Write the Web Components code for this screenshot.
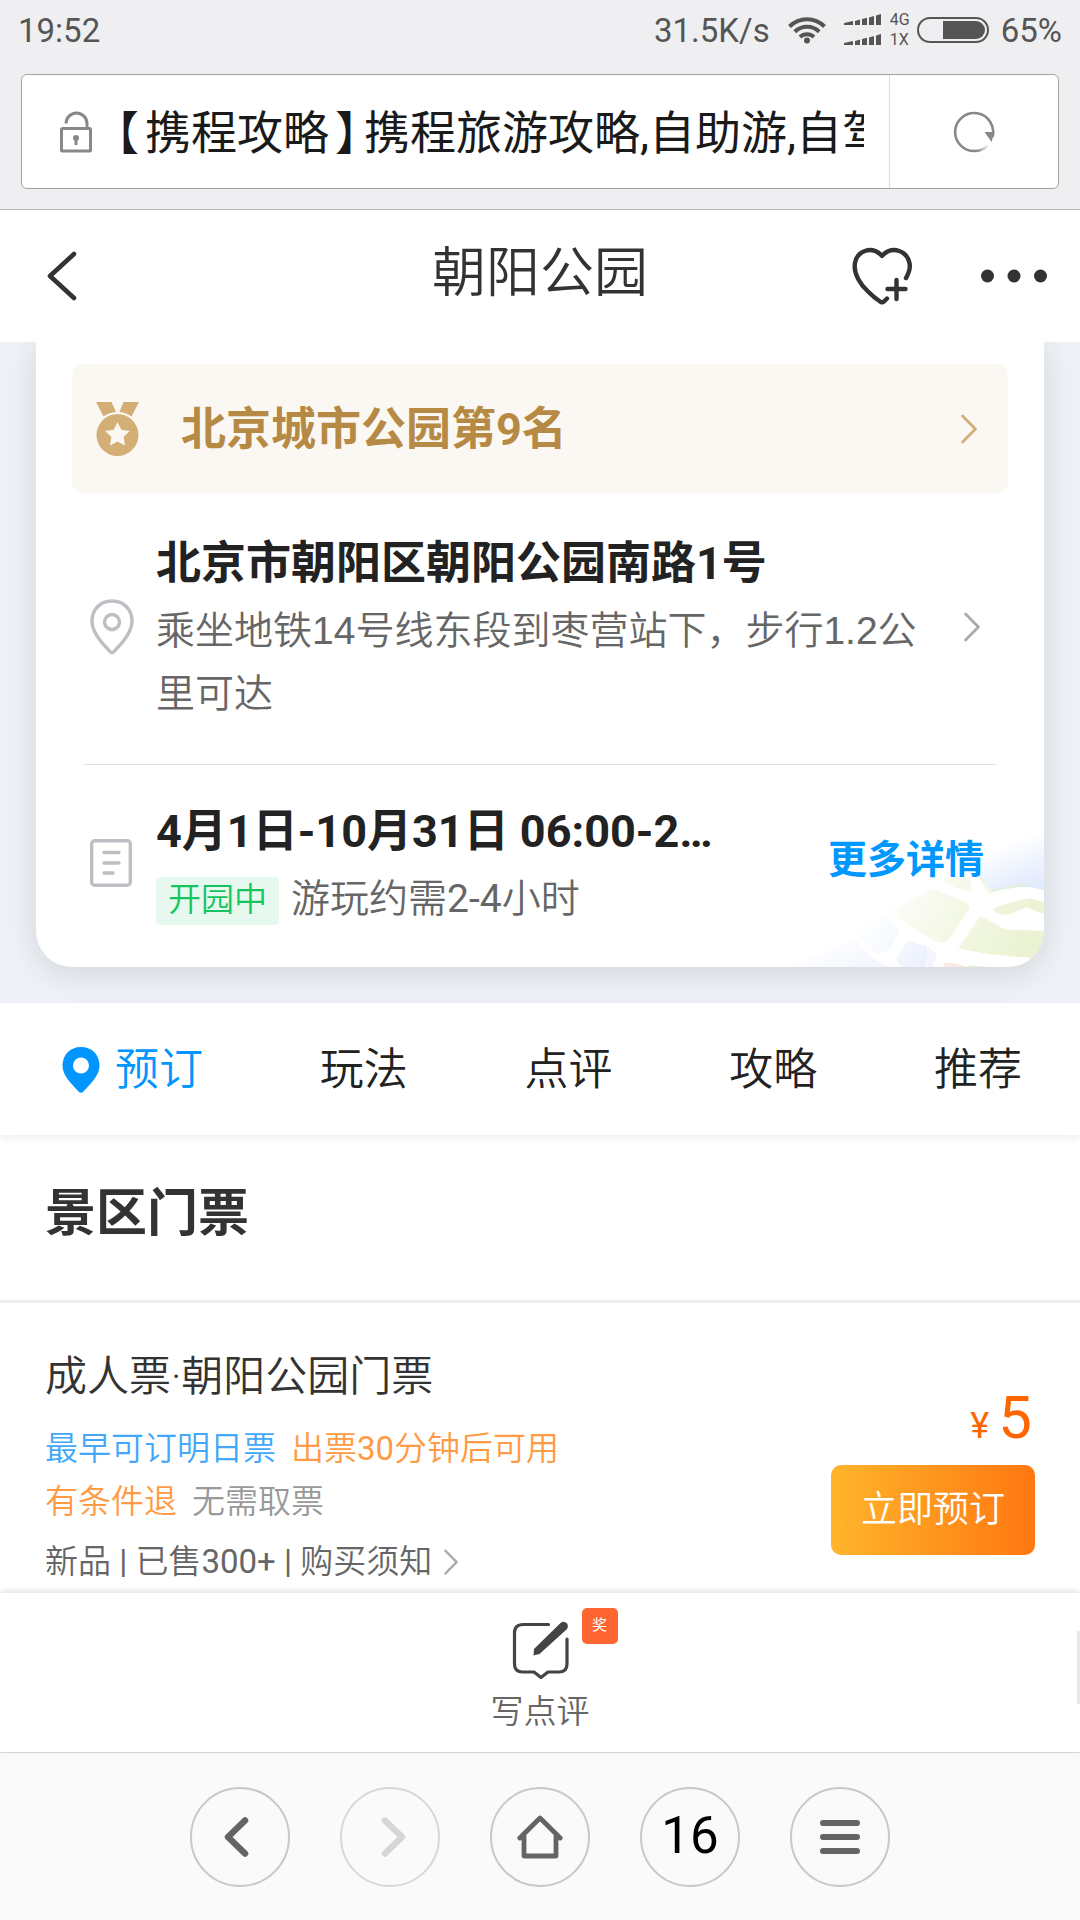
<!DOCTYPE html>
<html lang="zh-CN">
<head>
<meta charset="utf-8">
<meta name="viewport" content="width=device-width, initial-scale=1">
<title>朝阳公园</title>
<style>
  body { margin: 0; font-family: Roboto, "Noto Sans CJK SC", sans-serif; background: #fff; color: #222; }
</style>
</head>
<body>
<park-page></park-page>

<script>
const BASE = `
  *, *::before, *::after { box-sizing: border-box; }
  :host { display: block; }
  h1, h2, h3, p { margin: 0; }
  button { margin: 0; padding: 0; border: 0; background: none; font: inherit; color: inherit; cursor: pointer; }
  a { color: inherit; text-decoration: none; }
  svg { display: block; flex: none; }
  .num { font-weight: 400; }
`;

function define(name, css, html) {
  const template = document.createElement('template');
  template.innerHTML = `<style>${BASE}${css}</style>${html}`;
  customElements.define(name, class extends HTMLElement {
    constructor() {
      super();
      this.attachShadow({ mode: 'open' }).append(template.content.cloneNode(true));
    }
  });
}

/* Right-pointing chevron shared by the rows */
define('chevron-icon', `
  :host { display: block; flex: none; width: 16px; color: #a9abae; }
  svg { width: 100%; }
`, `<svg viewBox="0 0 16 30" fill="none" stroke="currentColor" stroke-width="2.8" stroke-linecap="round" stroke-linejoin="round"><path d="M1.6 2 L14.4 15 L1.6 28"/></svg>`);

define('status-bar', `
  :host { display: flex; align-items: center; justify-content: space-between; height: 60px; padding: 0 18px; color: #555; font-size: 33px; line-height: 40px; }
  span { padding-top: 2px; }
  .right { display: flex; align-items: center; }
  .wifi { margin-left: 18px; }
  .signal { margin-left: 18px; }
  .net { margin-left: 9px; font-size: 16px; line-height: 20px; width: 25px; }
  .battery { margin: 0 12px 0 2px; }
`, `
  <span>19:52</span>
  <div class="right">
    <span>31.5K/s</span>
    <svg class="wifi" width="38" height="28" viewBox="0 0 38 28" fill="none" stroke="#555" stroke-width="4">
      <path d="M1.5 10.5 A24.5 24.5 0 0 1 36.500 10.500"/>
      <path d="M6.800 15.800 A17.500 17.500 0 0 1 31.200 15.800"/>
      <path d="M12 21 A10 10 0 0 1 26 21"/>
      <circle cx="19" cy="24.500" r="3" fill="#555" stroke="none"/>
    </svg>
    <svg class="signal" width="37" height="32" viewBox="0 0 37 32" fill="#555">
      <path d="M0 9 L9 7 V11 H0Z M11 7 L16 5.500 V11 H11Z M18 5 L23 3.800 V11 H18Z M25 3.500 L30 2 V11 H25Z M32 1.500 L37 0 V11 H32Z"/>
      <path d="M0 29 L9 27 V31 H0Z M11 27 L16 25.500 V31 H11Z M18 25 L23 23.800 V31 H18Z M25 23.500 L30 22 V31 H25Z M32 21.500 L37 20 V31 H32Z"/>
    </svg>
    <div class="net"><div>4G</div><div>1X</div></div>
    <svg class="battery" width="72" height="26" viewBox="0 0 72 26">
      <rect x="1" y="1" width="70" height="24" rx="12" fill="none" stroke="#555" stroke-width="2"/>
      <path d="M26 4 H59 A9 9 0 0 1 59 22 H26Z" fill="#555"/>
    </svg>
    <span>65%</span>
  </div>
`);

define('address-bar', `
  :host { padding: 14px 21px 20px; border-bottom: 1px solid #bbb; }
  .box { display: flex; height: 115px; background: #fff; border: 1px solid #a2a2a4; border-radius: 6px; }
  .page { flex: 1; min-width: 0; display: flex; align-items: center; padding: 0 25px 0 38px; text-align: left; color: #1a1a1a; }
  .title { flex: 1; min-width: 0; margin-left: 18px; padding-top: 2px; overflow: hidden; white-space: nowrap; font-size: 46px; line-height: 64px; }
  .mark { padding: 0 6px; font-feature-settings: "halt"; }
  .reload { display: flex; align-items: center; justify-content: center; width: 169px; border-left: 1px solid #ddd; }
`, `
  <div class="box">
    <button class="page" type="button">
      <svg width="32" height="42" viewBox="0 0 32 42" fill="none" stroke="#888" stroke-width="3">
        <path d="M6 12.500 A10.500 10.500 0 0 1 27 12.500 V17"/>
        <rect x="1.500" y="17.500" width="29" height="22.500" rx="1"/>
        <circle cx="16" cy="27" r="3" fill="#888" stroke="none"/>
        <path d="M16 27 V34"/>
      </svg>
      <span class="title"><span class="mark">【</span>携程攻略<span class="mark">】</span>携程旅游攻略,自助游,自驾</span>
    </button>
    <button class="reload" type="button" aria-label="刷新">
      <svg width="42" height="42" viewBox="-1 0 42 42" fill="none">
        <defs><linearGradient id="fade" gradientUnits="userSpaceOnUse" x1="22" y1="40" x2="35" y2="34"><stop stop-color="#888"/><stop offset="1" stop-color="#888" stop-opacity="0"/></linearGradient></defs>
        <path d="M38.500 26 A19 19 0 1 0 21 40" stroke="#888" stroke-width="2.600"/>
        <path d="M21 40 A19 19 0 0 0 34 34.500" stroke="url(#fade)" stroke-width="2.600"/>
        <path d="M30.500 21 H40.500 L37.500 31Z" fill="#888"/>
      </svg>
    </button>
  </div>
`);

define('page-header', `
  :host { display: grid; grid-template-columns: 1fr auto 1fr; align-items: center; padding: 0 32px 0 47px; height: 132px; background: #fff; color: #333; }
  h1 { font-size: 54px; line-height: 76px; font-weight: 350; padding: 0 0 4px; margin-left: -15px; }
  .back { justify-self: start; }
  .actions { justify-self: end; display: flex; align-items: center; gap: 67px; }
`, `
  <button class="back" type="button" aria-label="返回">
    <svg width="30" height="50" viewBox="0 0 30 50" fill="none" stroke="#333" stroke-width="4.600" stroke-linecap="round" stroke-linejoin="round"><path d="M27 3 L3 25 L27 47"/></svg>
  </button>
  <h1>朝阳公园</h1>
  <div class="actions">
    <button type="button" aria-label="收藏">
      <svg width="61" height="58" viewBox="0 0 61 58" fill="none" stroke="#333" stroke-width="4.400" stroke-linecap="round" stroke-linejoin="round">
        <path d="M54 31 C57 26 58.500 21 57.500 16 C55 4 41 -1 32 7 L30 9 L28 7 C19 -1 5 4 3 16 C1 27 9 38 16 44.500 C21 49.500 25 52.500 28 54.500 Q30 56 32 54.500 L35 51.500"/>
        <path d="M44.500 33 V52 M35.500 42 H53.500"/>
      </svg>
    </button>
    <button type="button" aria-label="更多">
      <svg width="68" height="14" viewBox="0 0 68 14" fill="#333"><circle cx="7.500" cy="7" r="6.500"/><circle cx="34" cy="7" r="6.500"/><circle cx="60.500" cy="7" r="6.500"/></svg>
    </button>
  </div>
`);

define('rank-banner', `
  a { display: flex; align-items: center; height: 129px; padding: 0 31px 0 24px; border-radius: 10px; background: #fbf8f4; color: #b68a44; }
  .text { flex: 1; margin-left: 42px; padding-top: 2px; font-size: 45px; line-height: 62px; font-weight: 700; }
  chevron-icon { color: #d3ae75; }
`, `
  <a href="#rank">
    <svg width="43" height="54" viewBox="0 0 43 54" fill="#d3ae75">
      <path d="M0 0 H15.500 L20 10 C15 10.500 11 12 7.500 14.500Z M27.500 0 H43 L35.500 14.500 C32 12 28 10.500 23.500 10Z"/>
      <path fill-rule="evenodd" d="M21.500 12 A21 21 0 1 0 21.500 54 A21 21 0 1 0 21.500 12Z M21.500 20 L25.300 27.800 L33.800 29 L27.600 35 L29.100 43.500 L21.500 39.500 L13.900 43.500 L15.400 35 L9.200 29 L17.700 27.800Z"/>
    </svg>
    <span class="text"><slot></slot></span>
    <chevron-icon></chevron-icon>
  </a>
`);

/* Row with an icon, text lines and a trailing control */
define('info-row', `
  :host { display: flex; align-items: center; margin: 0 12px; padding: 36px 16px 39px 6px; }
  .icon { display: flex; width: 44px; flex: none; }
  .body { flex: 1; min-width: 0; margin: 0 20px 0 22px; }
`, `
  <div class="icon"><slot name="icon"></slot></div>
  <div class="body"><slot></slot></div>
  <slot name="end"></slot>
`);

define('info-card', `
  :host { padding: 0 36px 36px; background: #eef2f6; overflow: hidden; }
  article { position: relative; padding: 22px 36px 0; background: #fff; border-radius: 0 0 36px 36px; box-shadow: 0 6px 30px rgba(50,50,60,.15); }
  .map { position: absolute; right: 0; bottom: 0; border-bottom-right-radius: 36px; }
  rank-banner, info-row { position: relative; }
  h2 { font-size: 45px; line-height: 70px; font-weight: 700; color: #222; white-space: nowrap; }
  .hours h2 { line-height: 62px; }
  .route { font-family: "Liberation Sans", "Noto Sans CJK SC", sans-serif; font-size: 39px; line-height: 63px; font-weight: 350; color: #666; }
  .address { border-bottom: 1px solid #dfe1e4; }
  .hours { padding: 36px 12px 42px 6px; }
  .line { display: flex; align-items: center; gap: 12px; margin-top: 14px; font-size: 39px; line-height: 44px; font-weight: 350; color: #666; white-space: nowrap; }
  .line .note { padding-bottom: 4px; }
  .line .tag { padding: 0 12px 2px; border-radius: 4px; background: #e7f9ef; color: #16c45f; font-size: 33px; line-height: 46px; }
  .more { padding-bottom: 6px; font-size: 39px; line-height: 54px; font-weight: 700; color: #0098ff; }
`, `
  <article>
    <svg class="map" width="251" height="147" viewBox="580 240 752 441">
      <defs>
        <linearGradient id="veil" gradientUnits="userSpaceOnUse" x1="880" y1="440" x2="1260" y2="640"><stop stop-color="#fff" stop-opacity=".06"/><stop offset=".5" stop-color="#fff" stop-opacity=".4"/><stop offset="1" stop-color="#fff" stop-opacity=".7"/></linearGradient>
        <linearGradient id="sky" gradientUnits="userSpaceOnUse" x1="1220" y1="310" x2="1280" y2="460"><stop stop-color="#dbe6fd" stop-opacity="0"/><stop offset="1" stop-color="#dfe8fd"/></linearGradient>
        <linearGradient id="low" gradientUnits="userSpaceOnUse" x1="700" y1="590" x2="750" y2="700"><stop stop-color="#f3f6fd" stop-opacity="0"/><stop offset="1" stop-color="#f3f6fd"/></linearGradient>
        <mask id="m"><rect x="580" y="240" width="752" height="441" fill="url(#veil)"/></mask>
      </defs>
      <path d="M1332 250 V452 Q1280 428 1180 455 L1140 415 L1120 330Z" fill="url(#sky)"/>
      <path d="M580 681 L770 590 Q790 650 870 681Z" fill="url(#low)"/>
      <g mask="url(#m)">
        <path d="M1140 412 L1170 455 Q1230 438 1280 435" fill="none" stroke="#e5efc9" stroke-width="9"/>
        <path d="M1030 415 L1110 412 L1118 455 Q1080 450 1030 428Z" fill="#e5efc9"/>
        <path d="M870 515 L1000 445 L1100 488 Q1114 496 1108 508 L1045 600 Q1032 616 1008 604 Q960 580 870 515Z" fill="#e2edbf"/>
        <path d="M1178 508 Q1210 488 1290 475 L1332 487 V522 L1280 502 L1225 525 Q1190 525 1178 508Z" fill="#e2edbf"/>
        <path d="M1142 528 L1215 568 L1332 572 V600 Q1320 640 1290 652 Q1170 648 1075 624Z" fill="#e2edbf"/>
        <path d="M770 580 L850 525 L900 572 L870 630 Q840 650 805 625Z" fill="#c8dcfb"/>
        <path d="M925 602 L980 620 Q990 650 975 681 H905 Q885 665 892 645Z" fill="#ccd9fb"/>
        <path d="M985 618 L1012 645 L998 681 H982Z" fill="#e9e2f8"/>
        <path d="M1035 670 Q1050 662 1100 681 H1030Z" fill="#fbd0cc"/>
        <path d="M1110 675 L1170 681 H1100Z" fill="#dcecb0"/>
        <path d="M1285 654 L1305 638 L1300 654Z" fill="#fbdcd6"/>
      </g>
    </svg>
    <rank-banner>北京城市公园第9名</rank-banner>
    <info-row class="address">
      <svg slot="icon" width="44" height="56" viewBox="0 0 44 56" fill="none" stroke="#bcc0c4" stroke-width="3.400" stroke-linejoin="round">
        <path d="M22 2 C10 2 2 10.500 2 22 C2 35 15 47 20.500 53 Q22 54.500 23.500 53 C29 47 42 35 42 22 C42 10.500 34 2 22 2Z"/><circle cx="22" cy="23" r="7.500"/>
      </svg>
      <h2>北京市朝阳区朝阳公园南路1号</h2>
      <p class="route">乘坐地铁14号线东段到枣营站下，步行1.2公里可达</p>
      <chevron-icon slot="end"></chevron-icon>
    </info-row>
    <info-row class="hours">
      <svg slot="icon" width="42" height="48" viewBox="0 0 42 48" fill="none" stroke="#bcc0c4" stroke-width="3.400" stroke-linecap="round">
        <rect x="1.700" y="1.700" width="38.600" height="44.600" rx="3"/><path d="M14 13.500 H29 M14 24 H29 M14 34 H23"/>
      </svg>
      <h2>4月1日-10月31日 06:00-2…</h2>
      <div class="line"><span class="tag">开园中</span><span class="note">游玩约需<span class="num">2-4</span>小时</span></div>
      <a slot="end" class="more" href="#detail">更多详情</a>
    </info-row>
  </article>
`);

define('tab-bar', `
  :host { position: relative; background: #fff; box-shadow: 0 3px 8px rgba(0,0,0,.07); }
  nav { display: flex; justify-content: space-between; align-items: center; height: 132px; padding: 1px 58px 0 62px; font-size: 44px; line-height: 62px; font-weight: 350; color: #222; }
  a { display: flex; align-items: center; gap: 15px; }
  .on { color: #0095ff; }
`, `
  <nav>
    <a class="on" href="#book"><svg width="38" height="46" viewBox="0 0 38 46" fill="#0095ff"><path fill-rule="evenodd" d="M19 0 C8 0 .500 8 .500 18.500 C.500 29 10 37 16.500 44.500 Q19 47 21.500 44.500 C28 37 37.500 29 37.500 18.500 C37.500 8 30 0 19 0Z M19 10.500 A8 8 0 1 1 19 26.500 A8 8 0 1 1 19 10.500Z"/></svg>预订</a>
    <a href="#play">玩法</a>
    <a href="#review">点评</a>
    <a href="#guide">攻略</a>
    <a href="#recommend">推荐</a>
  </nav>
`);

define('ticket-item', `
  :host { display: flex; align-items: flex-end; justify-content: space-between; padding: 44px 45px 8px; font-size: 33px; font-weight: 350; }
  h3 { font-size: 42px; line-height: 60px; font-weight: 350; color: #333; }
  .tags { display: flex; flex-wrap: wrap; column-gap: 15px; max-width: 560px; margin: 15px 0 10px; line-height: 53px; }
  .blue { color: #44a8fa; } .orange { color: #ff9b45; } .grey { color: #999; }
  .notes { display: flex; align-items: center; line-height: 48px; color: #666; white-space: pre; }
  .notes chevron-icon { width: 14px; margin-left: 12px; }
  .buy { display: flex; flex-direction: column; align-items: flex-end; gap: 4px; padding-bottom: 31px; }
  .price { margin-right: 3px; color: #ff6600; font-size: 60px; line-height: 70px; font-weight: 400; }
  .price small { margin-right: 9px; font-size: 36px; }
  .buy button { width: 204px; height: 90px; border-radius: 10px; background: linear-gradient(90deg, #ffb52b, #ff7711); color: #fff; font-size: 36px; line-height: 50px; font-weight: 350; }
`, `
  <div>
    <h3><slot></slot></h3>
    <div class="tags">
      <span class="blue">最早可订明日票</span><span class="orange">出票<span class="num">30</span>分钟后可用</span>
      <span class="orange">有条件退</span><span class="grey">无需取票</span>
    </div>
    <a class="notes" href="#notes"><span>新品<span class="num"> | </span>已售<span class="num">300+ | </span>购买须知</span><chevron-icon></chevron-icon></a>
  </div>
  <div class="buy">
    <div class="price"><small>¥</small>5</div>
    <button type="button">立即预订</button>
  </div>
`);

define('ticket-section', `
  :host { background: #fff; }
  h2 { padding: 46px 45px 53px; border-bottom: 3px solid #ededef; font-size: 51px; line-height: 66px; font-weight: 700; color: #333; }
`, `
  <h2>景区门票</h2>
  <ticket-item>成人票·朝阳公园门票</ticket-item>
`);

define('review-bar', `
  :host { position: relative; display: flex; justify-content: center; background: #fff; box-shadow: 0 -2px 6px rgba(0,0,0,.12); }
  .write { position: relative; display: flex; flex-direction: column; align-items: center; gap: 10px; padding: 27px 0 18px; color: #666; font-size: 33px; line-height: 44px; font-weight: 350; }
  .badge { position: absolute; top: 15px; right: -28px; width: 36px; height: 36px; border-radius: 5px; background: #ff6531; color: #fff; font-size: 15px; line-height: 34px; font-weight: 400; text-align: center; }
  .thumb { position: absolute; right: 0; top: 38px; width: 3px; height: 73px; background: #e9e9eb; }
`, `
  <button class="write" type="button">
    <svg width="58" height="60" viewBox="-1 0 58 60" fill="none" stroke="#444" stroke-width="3.200" stroke-linecap="round" stroke-linejoin="round">
      <path d="M36.500 4.500 H11 Q2.500 4.500 2.500 13 V44 Q2.500 52 10.500 52 H22 L29 57.500 L36 52 H47 Q55 52 55 44 V19"/>
      <path d="M22 29 L48.500 3 Q52 .500 55 3.500 Q57 6.500 54.500 9.500 L27.500 34 L21.500 35.500Z" fill="#444" stroke="none"/>
    </svg>
    <span>写点评</span>
    <span class="badge">奖</span>
  </button>
  <span class="thumb"></span>
`);

define('browser-nav', `
  :host { border-top: 1px solid #ddd; background: #fafafa; }
  nav { display: flex; justify-content: center; gap: 50px; padding: 34px 0 33px; }
  button { display: flex; align-items: center; justify-content: center; width: 100px; height: 100px; border: 2px solid #c8c8c8; border-radius: 50%; }
  button:disabled { border-color: #d8d8d8; }
  .count { color: #000; font-size: 51px; line-height: 60px; font-weight: 400; padding-bottom: 2px; }
`, `
  <nav>
    <button type="button" aria-label="后退"><svg width="32" height="40" viewBox="0 0 32 40" fill="none" stroke="#646464" stroke-width="6.500" stroke-linecap="round"><path d="M21 3.500 L4 20 L21 36.500" stroke-linejoin="round"/></svg></button>
    <button type="button" aria-label="前进" disabled><svg width="32" height="40" viewBox="0 0 32 40" fill="none" stroke="#d6d6d6" stroke-width="6.500" stroke-linecap="round"><path d="M11 3.500 L28 20 L11 36.500" stroke-linejoin="round"/></svg></button>
    <button type="button" aria-label="主页"><svg width="46" height="46" viewBox="0 0 46 46" fill="none" stroke="#646464" stroke-width="4.800" stroke-linecap="round" stroke-linejoin="round"><path d="M2.800 24 L23 4 L43.200 24 M7 22 V42 H39 V22"/></svg></button>
    <button type="button" class="count" aria-label="16 个标签页">16</button>
    <button type="button" aria-label="菜单"><svg width="40" height="34" viewBox="0 0 40 34" stroke="#646464" stroke-width="6" stroke-linecap="round"><path d="M3 3 H37 M3 17 H37 M3 31 H37"/></svg></button>
  </nav>
`);

define('park-page', `
  :host { display: flex; flex-direction: column; height: 100vh; overflow: hidden; }
  .chrome { background: #efeff1; }
  main { flex: 1; min-height: 0; overflow: hidden; }
  .chrome, page-header, review-bar, browser-nav { flex: none; }
`, `
  <div class="chrome"><status-bar></status-bar><address-bar></address-bar></div>
  <page-header></page-header>
  <main>
    <info-card></info-card>
    <tab-bar></tab-bar>
    <ticket-section></ticket-section>
  </main>
  <review-bar></review-bar>
  <browser-nav></browser-nav>
`);
</script>
</body>
</html>
